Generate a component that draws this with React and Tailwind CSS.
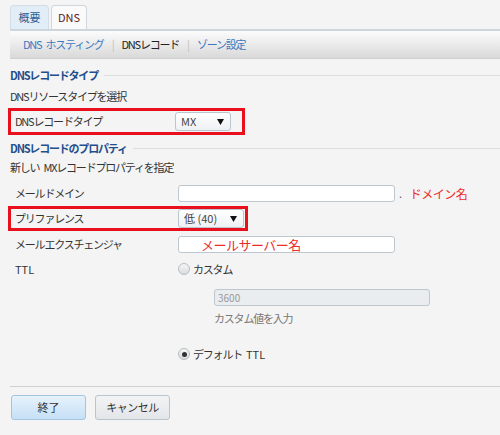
import React from "react";

const font = { fontFamily: '"Noto Sans CJK JP", "Noto Sans", sans-serif' };

function Arrow() {
  return (
    <svg width="7" height="6" viewBox="0 0 7 6">
      <path d="M0 0 L7 0 L3.5 6 Z" fill="#111" />
    </svg>
  );
}

function Sp() {
  return <span className="inline-block w-[4px]"> </span>;
}

function Select({ value, w }) {
  return (
    <div
      className={`${w} h-[19px] flex items-center justify-between pl-[5px] pr-[6px] border border-[#b9c6d0] rounded-[3px] bg-gradient-to-b from-white to-[#eef1f4] text-[11px] tracking-normal text-[#444]`}
    >
      <span>{value}</span>
      <Arrow />
    </div>
  );
}

function Radio({ checked }) {
  return (
    <span className="w-[12px] h-[12px] rounded-full border border-[#b7bcc1] bg-gradient-to-b from-[#f6f6f6] to-[#d9dcdf] flex items-center justify-center">
      {checked && <span className="w-[5px] h-[5px] rounded-full bg-[#333]" />}
    </span>
  );
}

export default function App() {
  return (
    <div className="w-[500px] h-[435px] bg-[#f4f4f4] text-[11px] tracking-[-1.2px] text-[#333] overflow-hidden" style={font}>
      {/* Tabs */}
      <div className="flex pl-[10px] pt-[5px] gap-[2px] h-[29px]">
        <div className="w-[39px] h-[24px] flex items-center justify-center bg-[#e2eef7] border border-[#d3dde6] border-b-0 rounded-t-[4px] text-[#2f5f96] tracking-normal">
          概要
        </div>
        <div className="w-[36px] h-[24px] flex items-center justify-center bg-[#fafafa] border border-[#cfd6dc] border-b-0 rounded-t-[4px] text-[#5a2222] tracking-normal">
          DNS
        </div>
      </div>
      {/* Sub nav */}
      <div className="ml-[10px] h-[30px] flex items-center pl-[13px] border-t-2 border-[#cdd5dd] border-b border-b-[#cfcfcf] bg-gradient-to-b from-[#fcfcfc] to-[#d9d9d9]">
        <span className="text-[#3a78c0]">DNS<Sp />ホスティング</span>
        <span className="mx-[8px] text-[#c0c0c0]">|</span>
        <span className="text-[#222]">DNSレコード</span>
        <span className="mx-[8px] text-[#c0c0c0]">|</span>
        <span className="text-[#3a78c0]">ゾーン設定</span>
      </div>

      <div className="px-[10px] flex flex-col">
        {/* heading 1 */}
        <div className="mt-[8px] h-[16px] flex items-center">
          <span className="text-[#1f4f8c] font-bold">DNSレコードタイプ</span>
          <span className="flex-1 h-px bg-[#dcdcdc] ml-[6px] mr-[-10px]" />
        </div>
        <div className="mt-[5px] h-[16px] flex items-center">DNSリソースタイプを選択</div>
        {/* red box 1 */}
        <div className="mt-[4px] ml-[-2px] w-[237px] h-[27px] border-[3px] border-[#e8101c] flex items-center">
          <span className="w-[164px] pl-[4px]">DNSレコードタイプ</span>
          <Select value="MX" w="w-[56px]" />
        </div>
        {/* heading 2 */}
        <div className="mt-[5px] h-[16px] flex items-center">
          <span className="text-[#1f4f8c] font-bold">DNSレコードのプロパティ</span>
          <span className="flex-1 h-px bg-[#dcdcdc] ml-[6px] mr-[-10px]" />
        </div>
        <div className="mt-[3px] h-[16px] flex items-center">新しい<Sp />MXレコードプロパティを指定</div>
        {/* mail domain */}
        <div className="mt-[10px] h-[17px] flex items-center">
          <span className="w-[168px] pl-[5px]">メールドメイン</span>
          <div className="w-[217px] h-[17px] bg-white border border-[#bcc7d0] rounded-[3px]" />
          <span className="ml-[4px] text-[#555]">.</span>
          <span className="ml-[9px] text-[12px] tracking-[-0.5px] text-[#ee2b2b]">ドメイン名</span>
        </div>
        {/* red box 2 */}
        <div className="mt-[4px] ml-[-2px] w-[240px] h-[25px] border-[3px] border-[#e8101c] flex items-center">
          <span className="w-[167px] pl-[4px]">プリファレンス</span>
          <Select value="低 (40)" w="w-[66px]" />
        </div>
        {/* mail exchanger */}
        <div className="mt-[5px] h-[17px] flex items-center">
          <span className="w-[168px] pl-[5px]">メールエクスチェンジャ</span>
          <div className="w-[217px] h-[17px] bg-white border border-[#bcc7d0] rounded-[3px] flex items-center pl-[22px] text-[13px] tracking-[-0.5px] text-[#ee2b2b]">
            メールサーバー名
          </div>
        </div>
        {/* TTL */}
        <div className="mt-[8px] h-[16px] flex items-center">
          <span className="w-[168px] pl-[5px] tracking-normal">TTL</span>
          <Radio />
          <span className="ml-[3px]">カスタム</span>
        </div>
        <div className="mt-[12px] ml-[204px] w-[216px] h-[17px] bg-[#e9edf0] border border-[#bcc7d0] rounded-[3px] flex items-center pl-[3px] text-[10px] tracking-normal text-[#999]">
          3600
        </div>
        <div className="mt-[4px] ml-[204px] h-[16px] flex items-center text-[#777]">カスタム値を入力</div>
        <div className="mt-[20px] h-[16px] flex items-center pl-[168px]">
          <Radio checked />
          <span className="ml-[3px]">デフォルト<Sp /><span className="tracking-normal">TTL</span></span>
        </div>
        {/* divider */}
        <div className="mt-[24px] h-px bg-[#d0d0d0] mr-[-10px]" />
        {/* buttons */}
        <div className="mt-[8px] flex gap-[9px] pl-[1px]">
          <div className="w-[75px] h-[25px] flex items-center justify-center border border-[#a3c4df] rounded-[3px] bg-gradient-to-b from-[#e6f2fc] to-[#c6e0f6] text-[#333] tracking-normal">
            終了
          </div>
          <div className="w-[75px] h-[25px] flex items-center justify-center border border-[#b9c4cd] rounded-[3px] bg-gradient-to-b from-[#f2f3f4] to-[#e3e6e9] text-[#333] tracking-[-0.5px]">
            キャンセル
          </div>
        </div>
      </div>
    </div>
  );
}
